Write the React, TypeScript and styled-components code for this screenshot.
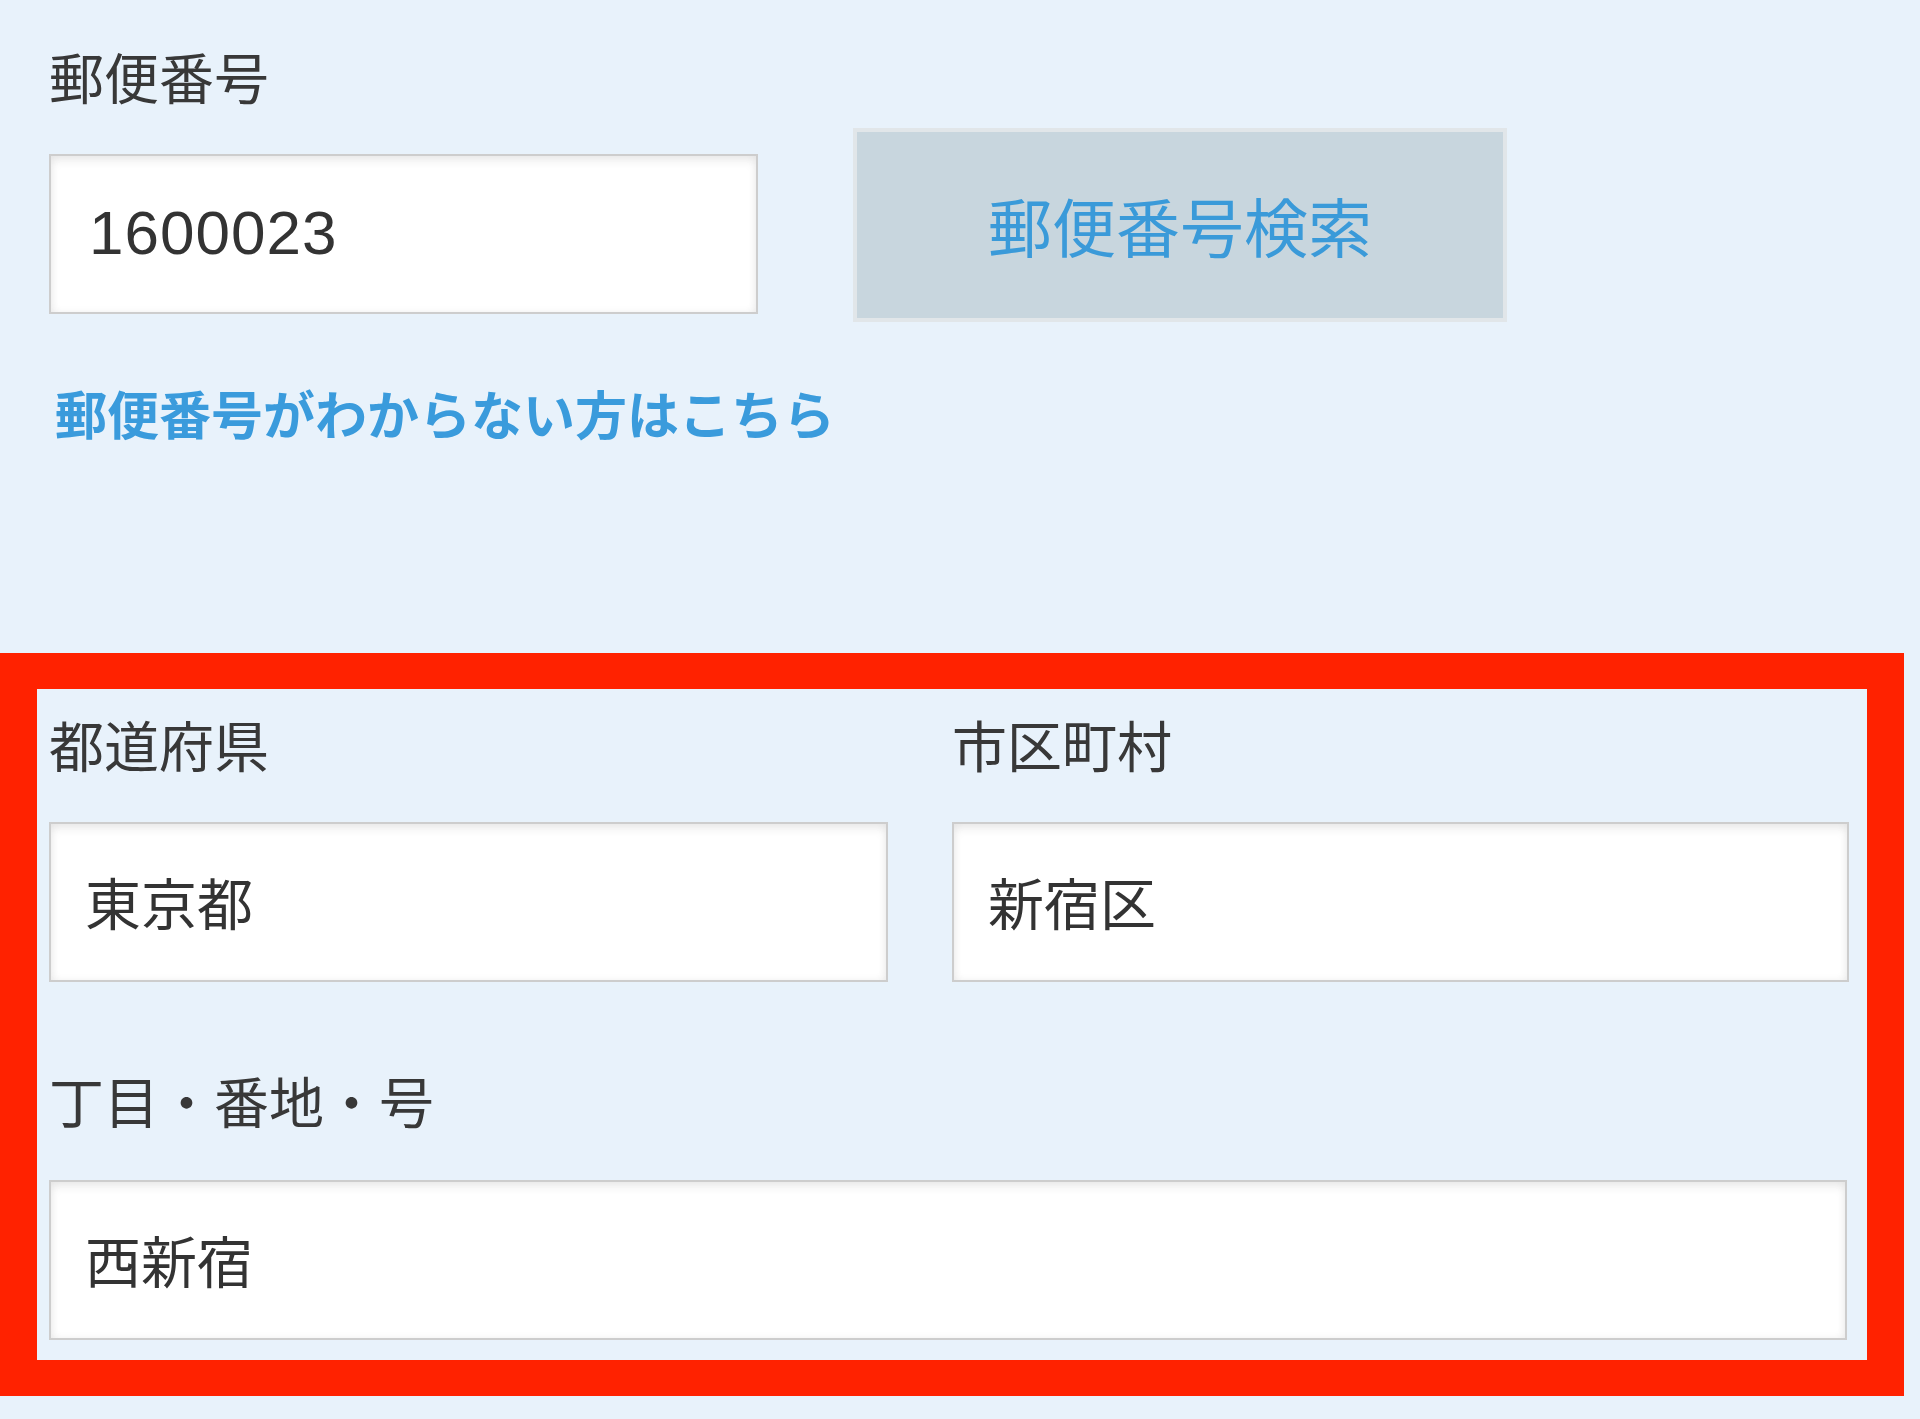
import styled, { createGlobalStyle } from "styled-components"

const GlobalStyle = createGlobalStyle`
  body {
    margin: 0;
    background: #e8f2fb;
    font-family: "Noto Sans CJK JP", "Noto Sans", sans-serif;
  }
`

const Page = styled.div`
  width: 1904px;
  padding: 48px 0 26px;
`

const ZipSection = styled.div`
  padding-left: 49px;
`

const FieldLabel = styled.p`
  margin: 0;
  font-size: 55px;
  line-height: 55px;
  color: #383838;
  white-space: nowrap;
`

const ZipRow = styled.div`
  display: flex;
  align-items: flex-start;
  gap: 95px;
  margin-top: 25px;
`

const TextField = styled.input<{ $width?: string; $digits?: boolean }>`
  box-sizing: border-box;
  display: block;
  width: ${(p) => p.$width || "100%"};
  height: 160px;
  margin: 0;
  padding: 0 0 4px 34px;
  border: 2px solid #cdcdcd;
  background: #fff;
  box-shadow: inset 0 5px 10px rgba(0, 0, 0, 0.07), inset 0 0 8px rgba(0, 0, 0, 0.05);
  color: #333;
  font-family: ${(p) => (p.$digits ? '"Liberation Sans", Arial' : '"Noto Sans CJK JP"')}, sans-serif;
  font-size: ${(p) => (p.$digits ? "62px" : "56px")};
  letter-spacing: ${(p) => (p.$digits ? "1px" : "0")};
  outline: none;
`

const ZipInput = styled(TextField)`
  margin-top: 26px;
  padding-left: 38px;
`

const SearchButton = styled.button`
  box-sizing: border-box;
  width: 654px;
  height: 194px;
  padding-bottom: 4px;
  border: 4px solid #e1e6e9;
  background: #c8d6de;
  color: #3a9ad9;
  font-family: "Noto Sans CJK JP", sans-serif;
  font-size: 64px;
  cursor: pointer;
`

const HelpLink = styled.a`
  display: block;
  margin: 65px 0 0 6px;
  font-size: 52px;
  line-height: 52px;
  font-weight: 700;
  color: #3a9bdc;
  text-decoration: none;
  white-space: nowrap;
`

const AddressBox = styled.div`
  margin-top: 214px;
  border: solid #ff2200;
  border-width: 36px 37px 36px 37px;
  padding: 27px 20px 20px 12px;
`

const AddressGrid = styled.div`
  display: grid;
  grid-template-columns: 839px 897px;
  column-gap: 64px;
`

const Field = styled.div<{ $gap: string; $top?: string }>`
  display: flex;
  flex-direction: column;
  gap: ${(p) => p.$gap};
  margin-top: ${(p) => p.$top || "0"};
`

const App = () => {
  return (
    <Page>
      <GlobalStyle />

      {/* 郵便番号 */}
      <ZipSection>
        <FieldLabel>郵便番号</FieldLabel>
        <ZipRow>
          <ZipInput $width="709px" $digits defaultValue="1600023" />
          <SearchButton type="button">郵便番号検索</SearchButton>
        </ZipRow>
        <HelpLink href="#">郵便番号がわからない方はこちら</HelpLink>
      </ZipSection>

      {/* 住所 */}
      <AddressBox>
        <AddressGrid>
          <Field $gap="51px">
            <FieldLabel>都道府県</FieldLabel>
            <TextField defaultValue="東京都" />
          </Field>
          <Field $gap="51px">
            <FieldLabel>市区町村</FieldLabel>
            <TextField defaultValue="新宿区" />
          </Field>
        </AddressGrid>
        <Field $gap="53px" $top="90px">
          <FieldLabel>丁目・番地・号</FieldLabel>
          <TextField defaultValue="西新宿" />
        </Field>
      </AddressBox>
    </Page>
  )
}

export default App
